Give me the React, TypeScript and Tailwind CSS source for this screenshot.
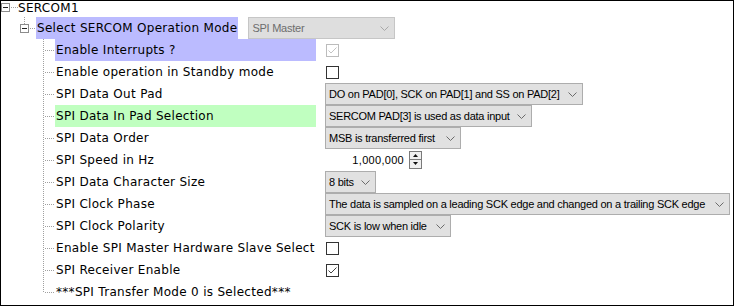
import React from "react";

type Control =
  | { kind: "check"; checked?: boolean; disabled?: boolean }
  | { kind: "combo"; value: string; width: string }
  | { kind: "spin"; value: string }
  | { kind: "none" };

type Row = {
  label: string;
  highlight?: string;
  control: Control;
};

const rows: Row[] = [
  { label: "Enable Interrupts ?", highlight: "bg-[#bbbbff]", control: { kind: "check", checked: true, disabled: true } },
  { label: "Enable operation in Standby mode", control: { kind: "check" } },
  { label: "SPI Data Out Pad", control: { kind: "combo", value: "DO on PAD[0], SCK on PAD[1] and SS on PAD[2]", width: "w-[258px]" } },
  { label: "SPI Data In Pad Selection", highlight: "bg-[#c0ffc0]", control: { kind: "combo", value: "SERCOM PAD[3] is used as data input", width: "w-[207px]" } },
  { label: "SPI Data Order", control: { kind: "combo", value: "MSB is transferred first", width: "w-[136px]" } },
  { label: "SPI Speed in Hz", control: { kind: "spin", value: "1,000,000" } },
  { label: "SPI Data Character Size", control: { kind: "combo", value: "8 bits", width: "w-[51px]" } },
  { label: "SPI Clock Phase", control: { kind: "combo", value: "The data is sampled on a leading SCK edge and changed on a trailing SCK edge", width: "w-[405px]" } },
  { label: "SPI Clock Polarity", control: { kind: "combo", value: "SCK is low when idle", width: "w-[126px]" } },
  { label: "Enable SPI Master Hardware Slave Select", control: { kind: "check" } },
  { label: "SPI Receiver Enable", control: { kind: "check", checked: true } },
  { label: "***SPI Transfer Mode 0 is Selected***", control: { kind: "none" } },
];

const dot = { stroke: "#a0a0a0", strokeWidth: 1, strokeDasharray: "1 1", shapeRendering: "crispEdges" as const };

function Chevron({ color = "#6b6b6b" }: { color?: string }) {
  return (
    <svg width="9" height="5" viewBox="0 0 9 5" className="shrink-0">
      <polyline points="0.5,0.5 4.5,4.5 8.5,0.5" fill="none" stroke={color} strokeWidth="1" />
    </svg>
  );
}

function Combo({ value, width, disabled }: { value: string; width: string; disabled?: boolean }) {
  return (
    <div
      className={`${width} flex h-[22px] items-center justify-between border pl-[3px] pr-[5px] font-['Liberation_Sans',sans-serif] text-[11px] tracking-[-0.25px] ${
        disabled ? "border-[#c6c6c6] bg-[#dedede] text-[#6d6d6d]" : "border-[#adadad] bg-[#e1e1e1] text-black"
      }`}
    >
      <span className="whitespace-nowrap">{value}</span>
      <Chevron color={disabled ? "#a8a8a8" : "#6b6b6b"} />
    </div>
  );
}

function Check({ checked, disabled }: { checked?: boolean; disabled?: boolean }) {
  const c = disabled ? "#bcbcbc" : "#333333";
  return (
    <svg width="13" height="13" viewBox="0 0 13 13" className="ml-[1px]">
      <rect x="0.5" y="0.5" width="12" height="12" fill="white" stroke={c} />
      {checked && <polyline points="2.5,6.5 5,9 10.5,3.5" fill="none" stroke={disabled ? "#c4c4c4" : "#444444"} strokeWidth="1" />}
    </svg>
  );
}

function Spin({ value }: { value: string }) {
  return (
    <div className="flex h-[22px] w-[100px] items-center justify-end bg-white pr-[3px] font-['Liberation_Sans',sans-serif] text-[11px] text-black">
      <span className="mr-[5px]">{value}</span>
      <svg width="13" height="18" viewBox="0 0 13 18">
        <rect x="0.5" y="0.5" width="12" height="17" fill="#f0f0f0" stroke="#7a7a7a" />
        <line x1="0" y1="8.5" x2="13" y2="8.5" stroke="#7a7a7a" />
        <polygon points="4,6 9,6 6.5,3" fill="#111" />
        <polygon points="4,11 9,11 6.5,14" fill="#111" />
      </svg>
    </div>
  );
}

function ChildLines({ last }: { last?: boolean }) {
  return (
    <svg width="54" height="22" viewBox="0 0 54 22" className="shrink-0">
      <line x1="42.5" y1="0" x2="42.5" y2={last ? 11 : 22} style={dot} />
      <line x1="44" y1="11.5" x2="54" y2="11.5" style={dot} />
    </svg>
  );
}

function ControlCell({ control }: { control: Control }) {
  if (control.kind === "check") return <Check checked={control.checked} disabled={control.disabled} />;
  if (control.kind === "combo") return <Combo value={control.value} width={control.width} />;
  if (control.kind === "spin") return <Spin value={control.value} />;
  return null;
}

export default function App() {
  return (
    <div className="h-[306px] w-[734px] overflow-hidden border border-black bg-white font-['DejaVu_Sans',sans-serif] text-[12px] tracking-[0.3px] text-black">
      {/* root node */}
      <div className="flex h-[16px] items-start">
        <svg width="17" height="16" viewBox="0 0 17 16" className="shrink-0">
          <rect x="0.5" y="2.5" width="8" height="8" fill="white" stroke="#8c8c8c" />
          <line x1="2" y1="6.5" x2="7" y2="6.5" stroke="#222" />
          <line x1="10" y1="6.5" x2="17" y2="6.5" style={dot} />
        </svg>
        <span className="leading-[14px]">SERCOM1</span>
      </div>

      {/* operation mode */}
      <div className="flex h-[22px] items-center">
        <svg width="35" height="22" viewBox="0 0 35 22" className="shrink-0">
          <line x1="23.5" y1="0" x2="23.5" y2="7" style={dot} />
          <rect x="19.5" y="7.5" width="8" height="8" fill="white" stroke="#8c8c8c" />
          <line x1="21" y1="11.5" x2="26" y2="11.5" stroke="#222" />
          <line x1="29" y1="11.5" x2="35" y2="11.5" style={dot} />
        </svg>
        <div className="flex h-full items-center bg-[#bbbbff] pl-[1px] pr-[1px]">Select SERCOM Operation Mode</div>
        <div className="ml-[10px]">
          <Combo value="SPI Master" width="w-[147px]" disabled />
        </div>
      </div>

      {rows.map((row, i) => (
        <div key={row.label} className="flex h-[22px] items-center">
          <ChildLines last={i === rows.length - 1} />
          <div className={`flex h-full w-[261px] shrink-0 items-center whitespace-nowrap pl-[1px] ${row.highlight ?? ""}`}>
            {row.label}
          </div>
          <div className="ml-[9px] flex items-center">
            <ControlCell control={row.control} />
          </div>
        </div>
      ))}
    </div>
  );
}
